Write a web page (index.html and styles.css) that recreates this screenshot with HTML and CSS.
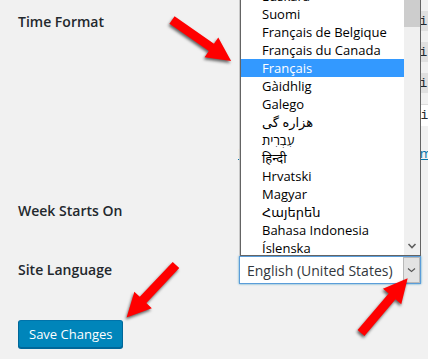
FILE: index.html
```html
<!DOCTYPE html>
<html>
	<head>
		<meta charset="UTF-8">
		<title>General Settings</title>
		<link rel="stylesheet" href="styles.css">
	</head>
	<body>
		<div class="settings">
			<div class="row row-time">
				<div class="label">Time Format</div>
				<div class="field">
					<div class="opt"><span class="radio"></span><span class="opt-text">5:23 pm</span><code>g:i a</code></div>
					<div class="opt"><span class="radio"></span><span class="opt-text">5:23 PM</span><code>g:i A</code></div>
					<div class="opt"><span class="radio"></span><span class="opt-text">17:23</span><code>H:i</code></div>
					<div class="opt"><span class="radio"></span><span class="opt-text">Custom:</span><span class="custom">g:i a</span></div>
					<p class="doc"><a href="#">Documentation on date and time formatting</a>.</p>
				</div>
			</div>
			<div class="row row-week">
				<div class="label">Week Starts On</div>
				<div class="field"><div class="select">Monday</div></div>
			</div>
			<div class="row row-lang">
				<div class="label">Site Language</div>
				<div class="field">
					<div class="select focus">
						<span class="select-text">English (United States)</span>
						<span class="drop-btn">
							<svg width="9" height="6" viewBox="0 0 9 6"><path d="M1 1.5 L4.5 4.5 L8 1.5" fill="none" stroke="#555" stroke-width="1.1"/></svg>
						</span>
					</div>
				</div>
			</div>
			<button class="button-primary">Save Changes</button>
		</div>

		<!-- open dropdown of the language select -->
		<div class="lang-list">
			<ul class="items">
				<li>Euskara</li>
				<li>Suomi</li>
				<li>Français de Belgique</li>
				<li>Français du Canada</li>
				<li class="selected">Français</li>
				<li>Gàidhlig</li>
				<li>Galego</li>
				<li dir="rtl" class="rtl">هزاره گی</li>
				<li dir="rtl" class="rtl">עִבְרִית</li>
				<li>हिन्दी</li>
				<li>Hrvatski</li>
				<li>Magyar</li>
				<li>Հայերեն</li>
				<li>Bahasa Indonesia</li>
				<li>Íslenska</li>
				<li>Italiano</li>
			</ul>
			<div class="scrollbar">
				<div class="thumb"></div>
				<svg class="down" width="16" height="16" viewBox="0 0 16 16"><path d="M4.5 6 L8 9.5 L11.5 6" fill="none" stroke="#606060" stroke-width="1.6"/></svg>
			</div>
		</div>

		<svg class="arrows" width="428" height="359" viewBox="0 0 428 359">
			<g fill="#f00">
				<polygon transform="translate(172,20) rotate(34.8)" points="0,-4.5 48,-4.5 48,-12 72,0 48,12 48,4.5 0,4.5"/>
				<polygon transform="translate(176,265) rotate(133.3)" points="0,-4.5 48,-4.5 48,-12 72,0 48,12 48,4.5 0,4.5"/>
				<polygon transform="translate(361,333) rotate(-49.6)" points="0,-4.5 48,-4.5 48,-12 72,0 48,12 48,4.5 0,4.5"/>
			</g>
		</svg>
	</body>
</html>
```

FILE: styles.css
```css
body{
	margin: 0;
	width: 428px;
	height: 359px;
	overflow: hidden;
	position: relative;
	background: #f1f1f1;
	font-family: "Open Sans", "Noto Sans", sans-serif;
	color: #23282d;
}
.settings{
	padding: 5px 0 0 18px;
}
.row{
	display: grid;
	grid-template-columns: 220px 1fr;
}
.label{
	font-size: 14px;
	font-weight: 600;
	line-height: 20px;
	white-space: nowrap;
}
.row-time{
	height: 196px;
}
.row-time .label{
	padding-top: 7px;
}
.row-week{
	height: 55px;
}
.row-lang{
	height: 28px;
}
.row-lang .label{
	padding-top: 4px;
}
.field{
	min-width: 0;
	white-space: nowrap;
	font-size: 13px;
}
.opt{
	height: 31px;
	display: flex;
	align-items: center;
}
.radio{
	width: 14px;
	height: 14px;
	border: 1px solid #b4b9be;
	border-radius: 50%;
	background: #fff;
	margin: 0 6px 0 1px;
	flex: none;
}
.opt-text{
	width: 138px;
	flex: none;
}
code{
	font-family: "Liberation Mono", monospace;
	font-size: 13px;
	padding: 3px 5px 2px;
	background: rgba(0,0,0,0.07);
}
.custom{
	display: block;
	width: 60px;
	height: 21px;
	line-height: 21px;
	padding: 0 6px;
	background: #fff;
	border-top: 1px solid #ddd;
	font-family: "Liberation Mono", monospace;
	margin-top: 2px;
}
.doc{
	margin: 14px 0 0;
	line-height: 20px;
}
.doc a{
	color: #0073aa;
}
.select{
	box-sizing: border-box;
	width: 182px;
	height: 28px;
	margin-left: 1px;
	border: 1px solid #ddd;
	background: #fff;
	display: flex;
	align-items: center;
	font-size: 14px;
	color: #32373c;
}
.select.focus{
	border-color: #5b9dd9;
	box-shadow: 0 0 2px rgba(30,140,190,0.8);
}
.select-text{
	flex: 1;
	padding-left: 7px;
}
.drop-btn{
	box-sizing: border-box;
	width: 17px;
	height: 100%;
	border: 1px solid #b9b9b9;
	background: #e3e3e3;
	display: flex;
	align-items: center;
	justify-content: center;
}
.button-primary{
	margin-top: 36px;
	height: 28px;
	padding: 0 10px 1px;
	font-family: "Open Sans", sans-serif;
	font-size: 13px;
	color: #fff;
	background: #0085ba;
	border: 1px solid;
	border-color: #0073aa #006799 #006799;
	border-radius: 3px;
	box-shadow: 0 1px 0 #006799;
}
.lang-list{
	position: absolute;
	left: 240px;
	top: -14px;
	box-sizing: border-box;
	width: 181px;
	height: 270px;
	border: 1px solid #646464;
	background: #fff;
	display: flex;
	overflow: hidden;
	box-shadow: -1px 0 0 #c8c8c8;
}
.items{
	flex: 1;
	margin: 0;
	padding: 0;
	list-style: none;
	font-family: "Open Sans", "DejaVu Sans", "Noto Sans Devanagari", "Noto Sans", sans-serif;
	font-size: 13px;
	color: #000;
}
.items li{
	height: 18px;
	line-height: 18px;
	padding-left: 21px;
	white-space: nowrap;
}
.items li.rtl{
	text-align: left;
	direction: ltr;
	unicode-bidi: plaintext;
}
.items li.selected{
	background: #3399ff;
	color: #fff;
}
.scrollbar{
	width: 16px;
	background: #f0f0f0;
	position: relative;
}
.thumb{
	margin-top: 13px;
	height: 27px;
	background: #cdcdcd;
}
.down{
	position: absolute;
	left: 0;
	bottom: 1px;
}
.arrows{
	position: absolute;
	left: 0;
	top: 0;
	pointer-events: none;
	filter: drop-shadow(-1px 2px 1.5px rgba(0,0,0,0.6));
}
```
